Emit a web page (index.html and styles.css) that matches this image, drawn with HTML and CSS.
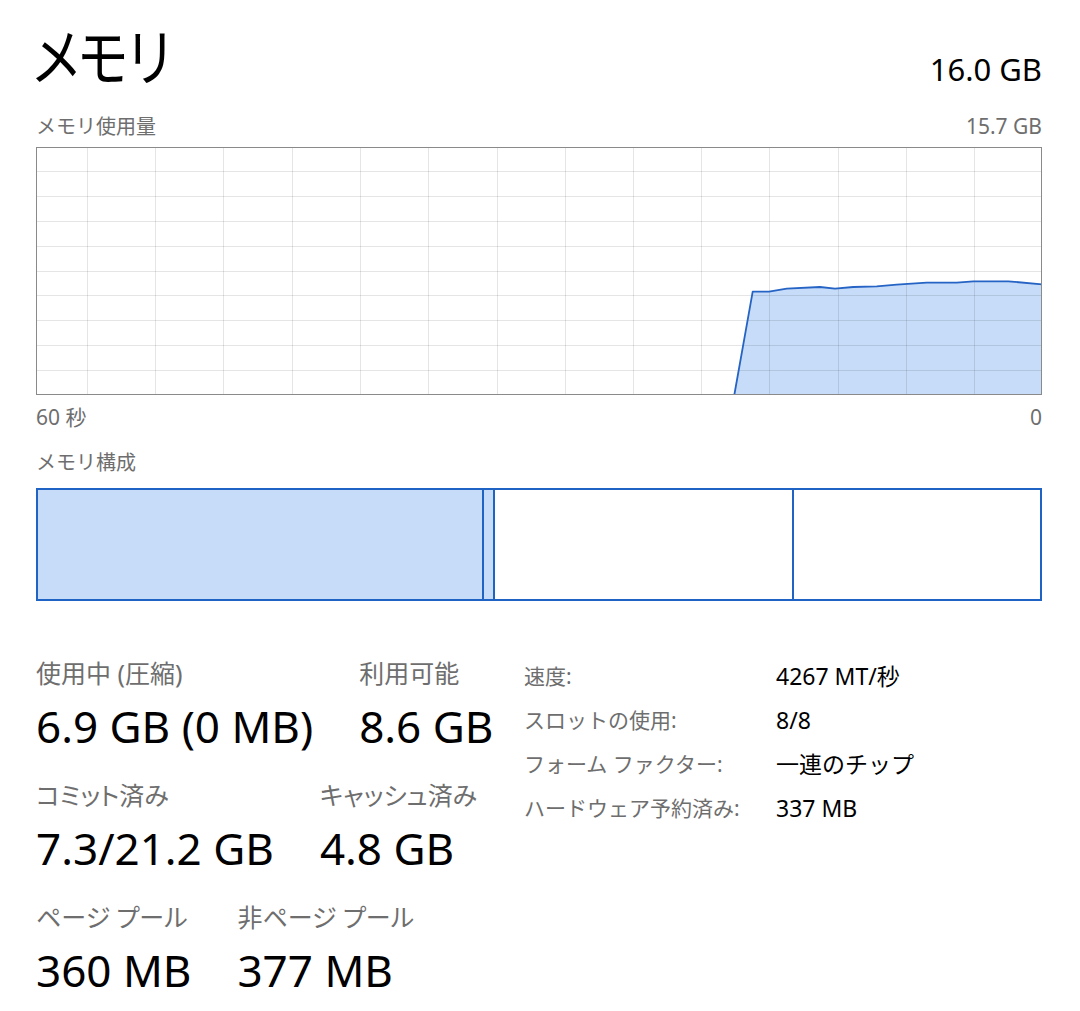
FILE: index.html
```html
<!DOCTYPE html>
<html lang="ja">
<head>
<meta charset="utf-8">
<title>メモリ</title>
<link rel="stylesheet" href="styles.css">
</head>
<body>
<div class="page">
  <header class="header">
    <h1 class="title">メモリ</h1>
    <div class="total">16.0 GB</div>
  </header>

  <div class="graph-head">
    <span class="label">メモリ使用量</span>
    <span class="max">15.7 GB</span>
  </div>

  <div class="graph">
    <svg width="1006" height="248" viewBox="0 0 1006 248">
      <polygon class="area" points="698.3,248 716.7,144.7 733,144.7 750.7,141.7 784,140 799,141.7 817.3,140 840.7,139.3 860.7,137.7 890.7,135.7 920.7,135.7 937.3,134.3 972.3,134.3 1006,137.3 1006,248"/>
      <g class="grid">
        <line x1="0" y1="24.5" x2="1006" y2="24.5"/>
        <line x1="0" y1="49.5" x2="1006" y2="49.5"/>
        <line x1="0" y1="74.5" x2="1006" y2="74.5"/>
        <line x1="0" y1="99.5" x2="1006" y2="99.5"/>
        <line x1="0" y1="124.5" x2="1006" y2="124.5"/>
        <line x1="0" y1="148.5" x2="1006" y2="148.5"/>
        <line x1="0" y1="173.5" x2="1006" y2="173.5"/>
        <line x1="0" y1="198.5" x2="1006" y2="198.5"/>
        <line x1="0" y1="223.5" x2="1006" y2="223.5"/>
        <line x1="51.5" y1="0" x2="51.5" y2="248"/>
        <line x1="119.5" y1="0" x2="119.5" y2="248"/>
        <line x1="187.5" y1="0" x2="187.5" y2="248"/>
        <line x1="256.5" y1="0" x2="256.5" y2="248"/>
        <line x1="324.5" y1="0" x2="324.5" y2="248"/>
        <line x1="392.5" y1="0" x2="392.5" y2="248"/>
        <line x1="461.5" y1="0" x2="461.5" y2="248"/>
        <line x1="529.5" y1="0" x2="529.5" y2="248"/>
        <line x1="597.5" y1="0" x2="597.5" y2="248"/>
        <line x1="665.5" y1="0" x2="665.5" y2="248"/>
        <line x1="733.5" y1="0" x2="733.5" y2="248"/>
        <line x1="802.5" y1="0" x2="802.5" y2="248"/>
        <line x1="870.5" y1="0" x2="870.5" y2="248"/>
        <line x1="938.5" y1="0" x2="938.5" y2="248"/>
      </g>
      <polyline class="trace" points="698.3,248 716.7,144.7 733,144.7 750.7,141.7 784,140 799,141.7 817.3,140 840.7,139.3 860.7,137.7 890.7,135.7 920.7,135.7 937.3,134.3 972.3,134.3 1006,137.3"/>
      <rect class="frame" x="0.5" y="0.5" width="1005" height="247"/>
    </svg>
  </div>

  <div class="axis">
    <span>60 秒</span>
    <span>0</span>
  </div>

  <div class="label comp-label">メモリ構成</div>

  <div class="composition">
    <div class="seg used" style="width:444px"></div>
    <div class="seg used divided" style="width:11px"></div>
    <div class="seg divided" style="width:299px"></div>
    <div class="seg divided" style="width:248px"></div>
  </div>

  <div class="details">
    <div class="stats">
      <div class="stat-row">
        <div class="stat">
          <div class="stat-label">使用中 (圧縮)</div>
          <div class="stat-value">6.9 GB (0 MB)</div>
        </div>
        <div class="stat">
          <div class="stat-label">利用可能</div>
          <div class="stat-value">8.6 GB</div>
        </div>
      </div>
      <div class="stat-row">
        <div class="stat">
          <div class="stat-label">コミット済み</div>
          <div class="stat-value">7.3/21.2 GB</div>
        </div>
        <div class="stat">
          <div class="stat-label">キャッシュ済み</div>
          <div class="stat-value">4.8 GB</div>
        </div>
      </div>
      <div class="stat-row">
        <div class="stat">
          <div class="stat-label">ページ プール</div>
          <div class="stat-value">360 MB</div>
        </div>
        <div class="stat">
          <div class="stat-label">非ページ プール</div>
          <div class="stat-value">377 MB</div>
        </div>
      </div>
    </div>

    <dl class="props">
      <dt>速度:</dt><dd>4267 MT/秒</dd>
      <dt>スロットの使用:</dt><dd>8/8</dd>
      <dt>フォーム ファクター:</dt><dd>一連のチップ</dd>
      <dt>ハードウェア予約済み:</dt><dd>337 MB</dd>
    </dl>
  </div>
</div>
</body>
</html>
```

FILE: styles.css
```css
html, body {
  margin: 0;
  padding: 0;
  background: #ffffff;
}

.page {
  width: 1006px;
  padding: 0 38px 0 36px;
  font-family: "Noto Sans", "Noto Sans CJK JP", sans-serif;
  color: #000;
}

.header {
  display: flex;
  justify-content: space-between;
  align-items: baseline;
  padding-top: 24px;
}

.title {
  margin: 0;
  font-family: "Noto Sans CJK JP", sans-serif;
  font-weight: 400;
  font-size: 62px;
  line-height: 60px;
  font-feature-settings: "palt";
  letter-spacing: -1px;
  margin-left: -3px;
  transform: scaleX(0.85);
  transform-origin: 0 50%;
}

.total {
  font-size: 31px;
  line-height: 40px;
}

.label {
  font-size: 20px;
  line-height: 24px;
  color: #6e6e6e;
}

.graph-head {
  display: flex;
  justify-content: space-between;
  align-items: baseline;
  margin-top: 25px;
  height: 24px;
}

.max {
  font-size: 21px;
  line-height: 24px;
  color: #6e6e6e;
}

.graph {
  margin-top: 9px;
  height: 248px;
}

.graph svg {
  display: block;
}

.area {
  fill: #c7dcf8;
  stroke: none;
}

.grid line {
  stroke: rgba(0, 0, 0, 0.1);
  stroke-width: 1;
}

.trace {
  fill: none;
  stroke: #2563c4;
  stroke-width: 1.8;
  stroke-linejoin: round;
}

.frame {
  fill: none;
  stroke: #8a8a8a;
  stroke-width: 1;
}

.axis {
  display: flex;
  justify-content: space-between;
  margin-top: 10px;
  font-size: 21px;
  line-height: 24px;
  color: #6e6e6e;
}

.comp-label {
  margin-top: 22px;
}

.composition {
  display: flex;
  margin-top: 13px;
  height: 113px;
  box-sizing: border-box;
  border: 2px solid #1f63c5;
}

.seg {
  flex: none;
  box-sizing: border-box;
  height: 100%;
  background: #fff;
}

.seg.used {
  background: #c7dcf8;
}

.seg.divided {
  border-left: 2px solid #1f63c5;
}

.details {
  display: flex;
  align-items: flex-start;
  margin-top: 50px;
}

.stats {
  flex: none;
  width: 488px;
  padding-top: 7px;
  display: flex;
  flex-direction: column;
  gap: 29px;
}

.stat-row {
  display: flex;
  gap: 46px;
}

.stat {
  display: flex;
  flex-direction: column;
}

.stat-label {
  font-size: 25px;
  line-height: 30px;
  color: #6e6e6e;
  font-feature-settings: "palt";
  white-space: nowrap;
}

.stat-value {
  margin-top: 13px;
  font-size: 44px;
  line-height: 50px;
  white-space: nowrap;
}

.props {
  margin: 3px 0 0;
  display: grid;
  grid-template-columns: 252px auto;
  grid-auto-rows: 44px;
}

.props dt {
  margin: 0;
  font-size: 21px;
  line-height: 44px;
  color: #6e6e6e;
  white-space: nowrap;
}

.props dd {
  margin: 0;
  font-size: 23px;
  line-height: 44px;
  white-space: nowrap;
}
```
